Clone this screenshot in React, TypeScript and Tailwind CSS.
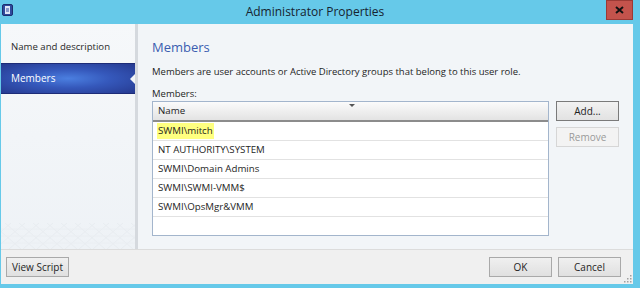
import React from 'react';

const members = [
  'SWMI\\mitch',
  'NT AUTHORITY\\SYSTEM',
  'SWMI\\Domain Admins',
  'SWMI\\SWMI-VMM$',
  'SWMI\\OpsMgr&VMM',
];

const WinButton: React.FC<{ label: string; disabled?: boolean; strong?: boolean; className?: string }> = ({
  label,
  disabled,
  strong,
  className,
}) => (
  <button
    className={
      'h-[20px] w-[63px] flex items-center justify-center text-[10px] leading-none border ' +
      (disabled
        ? 'border-[#d6d6d6] bg-[#f3f3f3] text-[#9a9a9a] '
        : strong
        ? 'border-[#7a7a7a] bg-gradient-to-b from-[#f2f2f2] to-[#e2e2e2] text-[#1e1e1e] '
        : 'border-[#a9a9a9] bg-gradient-to-b from-[#f0f0f0] to-[#e0e0e0] text-[#1e1e1e] ') +
      (className ?? '')
    }
  >
    {label}
  </button>
);

const App: React.FC = () => {
  return (
    <div className="w-[640px] h-[288px] bg-[#66c9e9] flex flex-col font-['Open_Sans',sans-serif] text-[#1e1e1e] overflow-hidden">
      {/* title bar */}
      <div className="h-[24px] flex items-start">
        <div className="w-[14px] pl-[2px] pt-[4px]">
          <svg width="11" height="12" viewBox="0 0 11 12">
            <rect x="0.5" y="0.5" width="10" height="11" rx="1.5" fill="#2f4a9c" stroke="#1c2f70" />
            <rect x="3" y="2" width="5" height="8" fill="#dfe7f7" />
            <rect x="4" y="4.5" width="3" height="1" fill="#2f4a9c" />
            <rect x="4" y="6.5" width="3" height="1" fill="#2f4a9c" />
          </svg>
        </div>
        <div className="flex-1 text-center text-[12px] leading-[24px] text-[#16232f] pl-[10px]">
          Administrator Properties
        </div>
        <div className="w-[27px] h-[20px] mr-[7px] bg-[#c4534c] border border-[#9c3a35] flex items-center justify-center">
          <svg width="9" height="8" viewBox="0 0 9 8">
            <path d="M1 1 L8 7 M8 1 L1 7" stroke="#111" strokeWidth="2" />
          </svg>
        </div>
      </div>

      {/* client area */}
      <div className="flex-1 ml-[1px] mr-[7px] mb-[4px] flex flex-col bg-[#f0f0f0]">
        <div className="flex-1 flex">
          {/* navigation */}
          <div className="w-[134px] flex flex-col bg-gradient-to-b from-[#f6f8fa] to-[#eef2f6] pt-[8px]">
            <div className="h-[31px] pl-[10px] flex items-center text-[9.6px] text-[#2a2a2a]">Name and description</div>
            <div className="relative h-[31px] pl-[10px] flex items-center text-[10px] text-white border-y border-[#1d2c78] bg-[radial-gradient(ellipse_at_center,#4b7fe0_0%,#3558bb_45%,#263a90_100%)]">
              Members
              <div className="absolute right-0 top-[10px] w-0 h-0 border-y-[5px] border-y-transparent border-r-[5px] border-r-[#f2f5f8]" />
            </div>
            <div className="mt-auto h-[26px]">
              <svg width="134" height="26" viewBox="0 0 134 26">
                {[0, 1, 2, 3, 4, 5, 6, 7, 8, 9, 10, 11].map((i) => (
                  <path key={'a' + i} d={`M${i * 14 - 20} 26 L${i * 14 + 10} 0`} stroke="#e8ecf1" strokeWidth="1" />
                ))}
                {[0, 1, 2, 3, 4, 5, 6, 7, 8, 9, 10, 11].map((i) => (
                  <path key={'b' + i} d={`M${i * 14 - 10} 0 L${i * 14 + 20} 26`} stroke="#e8ecf1" strokeWidth="1" />
                ))}
                <path d="M0 6 L134 6 M0 13 L134 13 M0 20 L134 20" stroke="#eaeef2" strokeWidth="1" />
              </svg>
            </div>
          </div>
          <div className="w-[3px] bg-[#d5d9de]" />

          {/* content */}
          <div className="flex-1 bg-[#f2f5f8] pl-[14px] pr-[13px] flex flex-col">
            <div className="mt-[13px] h-[20px] leading-[20px] text-[13px] text-[#3b5db0]">Members</div>
            <div className="mt-[8px] h-[14px] leading-[14px] text-[9.5px]">
              Members are user accounts or Active Directory groups that belong to this user role.
            </div>
            <div className="mt-[8px] h-[14px] leading-[14px] text-[9.5px]">Members:</div>
            <div className="flex gap-[7px]">
              <div className="w-[397px] h-[135px] border border-[#a3b5cc] bg-white flex flex-col">
                <div className="relative h-[20px] flex items-center pl-[5px] text-[9.7px] bg-gradient-to-b from-[#fbfbfb] to-[#e3e3e3] border-b-2 border-[#8c8c8c]">
                  Name
                  <div className="absolute left-[196px] top-[2px] w-0 h-0 border-x-[3px] border-x-transparent border-t-[3px] border-t-[#555]" />
                </div>
                {members.map((m, i) => (
                  <div key={m} className="h-[19px] flex items-center pl-[4px] text-[9.7px] border-b border-[#e2e2e2]">
                    <span className={i === 0 ? 'bg-[#ffff80] px-[1px] py-[1px]' : 'px-[1px]'}>{m}</span>
                  </div>
                ))}
              </div>
              <div className="flex flex-col gap-[6px]">
                <WinButton label="Add..." strong />
                <WinButton label="Remove" disabled />
              </div>
            </div>
          </div>
        </div>

        {/* bottom bar */}
        <div className="relative h-[35px] border-t border-[#dcdcdc] bg-[#f0f0f0] flex items-start pt-[7px] pl-[5px] pr-[12px]">
          <WinButton label="View Script" />
          <div className="flex-1" />
          <WinButton label="OK" />
          <WinButton label="Cancel" className="ml-[6px]" />
          <svg className="absolute right-[1px] bottom-[1px]" width="9" height="9" viewBox="0 0 9 9">
            {[
              [7, 1],
              [7, 4],
              [4, 4],
              [7, 7],
              [4, 7],
              [1, 7],
            ].map(([x, y]) => (
              <rect key={`${x}-${y}`} x={x} y={y} width="1.5" height="1.5" fill="#a0a0a0" />
            ))}
          </svg>
        </div>
      </div>
    </div>
  );
};

export default App;
